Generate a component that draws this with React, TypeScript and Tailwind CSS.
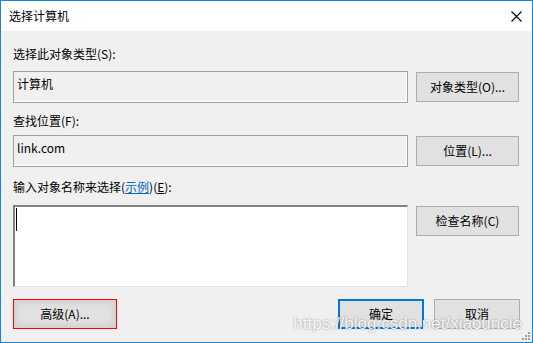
import { useState } from 'react'

const font = "font-['Microsoft_YaHei_UI','Noto_Sans_CJK_SC',sans-serif]"

function SideButton({ label }: { label: string }) {
  return (
    <button className="w-[103px] h-[30px] shrink-0 bg-[#e1e1e1] border border-[#adadad] text-[12px] text-black leading-none">
      {label}
    </button>
  )
}

export default function App() {
  const [names] = useState('')

  return (
    <div className={`relative w-[533px] h-[343px] border border-[#1883d7] bg-[#f0f0f0] flex flex-col overflow-hidden ${font}`}>
      {/* Title bar */}
      <div className="h-[30px] bg-white flex items-center justify-between pl-2 pr-[10px] shrink-0">
        <span className="text-[12px] text-black">选择计算机</span>
        <svg width="11" height="11" viewBox="0 0 11 11" className="mt-[1px]">
          <path d="M0.5 0.5 L10.5 10.5 M10.5 0.5 L0.5 10.5" stroke="#000" strokeWidth="1.1" />
        </svg>
      </div>

      <div className="flex flex-col px-3 pt-[15px] text-[12px] text-black">
        <div className="leading-4 h-4">选择此对象类型(S):</div>
        <div className="flex items-center gap-2 mt-[9px]">
          <div className="w-[395px] h-[32px] border border-[#a0a0a0] shadow-[inset_-1px_-1px_0_#fff] px-[3px] pt-[4px] leading-4">
            计算机
          </div>
          <SideButton label="对象类型(O)..." />
        </div>

        <div className="leading-4 h-4 mt-[10px]">查找位置(F):</div>
        <div className="flex items-center gap-2 mt-[6px]">
          <div className="w-[395px] h-[32px] border border-[#a0a0a0] shadow-[inset_-1px_-1px_0_#fff] px-[3px] pt-[4px] leading-4">
            link.com
          </div>
          <SideButton label="位置(L)..." />
        </div>

        <div className="leading-4 h-4 mt-[12px]">
          输入对象名称来选择(<span className="text-[#0066cc] underline">示例</span>)(<span className="underline">E</span>):
        </div>
        <div className="flex items-start gap-2 mt-[10px]">
          <div className="w-[395px] h-[82px] bg-white border-t-2 border-l-2 border-r border-b border-t-[#828282] border-l-[#828282] border-r-[#e3e3e3] border-b-[#e3e3e3] pl-[1px] pt-[1px]">
            {names}
            <div className="w-px h-[23px] bg-black" />
          </div>
          <div className="mt-[1px]">
            <SideButton label="检查名称(C)" />
          </div>
        </div>

        <div className="flex items-center mt-[12px]">
          <button className="w-[104px] h-[30px] border border-[#ff0000] bg-[#e1e1e1] shadow-[inset_0_0_6px_3px_#d0d0d0] text-[12px] text-black">
            高级(A)...
          </button>
          <div className="flex-1" />
          <button className="w-[86px] h-[30px] bg-[#e1e1e1] border-2 border-[#0078d7] text-[12px] text-black">
            确定
          </button>
          <button className="w-[86px] h-[30px] ml-[10px] bg-[#e1e1e1] border border-[#adadad] text-[12px] text-black">
            取消
          </button>
        </div>
      </div>

      {/* watermark */}
      <div className="absolute right-[10px] top-[310px] text-[17px] font-['Liberation_Sans',sans-serif] text-white/90 [text-shadow:0_0_2px_rgba(0,0,0,0.45)] pointer-events-none">
        https://blog.csdn.net/xiaouncle
      </div>

      {/* size grip */}
      <svg width="10" height="10" viewBox="0 0 10 10" className="absolute right-[1px] bottom-[1px]">
        <rect x="7" y="1" width="2" height="2" fill="#a0a0a0" />
        <rect x="4" y="4" width="2" height="2" fill="#a0a0a0" />
        <rect x="7" y="4" width="2" height="2" fill="#a0a0a0" />
        <rect x="1" y="7" width="2" height="2" fill="#a0a0a0" />
        <rect x="4" y="7" width="2" height="2" fill="#a0a0a0" />
        <rect x="7" y="7" width="2" height="2" fill="#a0a0a0" />
      </svg>
    </div>
  )
}
